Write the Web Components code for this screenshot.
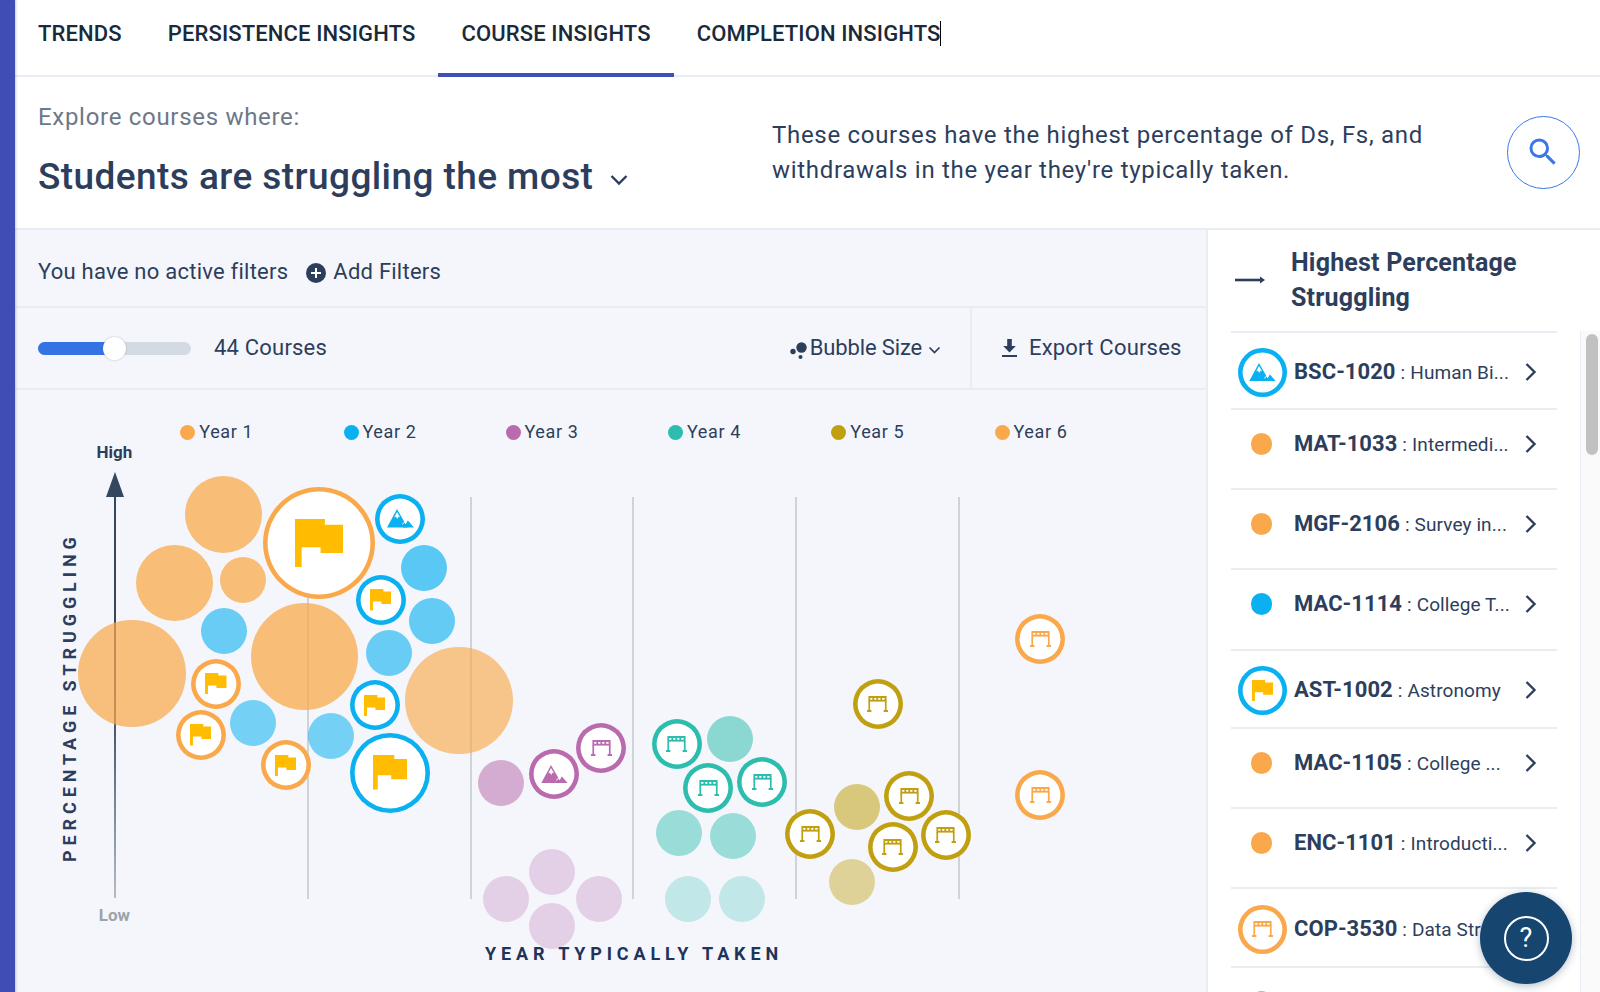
<!DOCTYPE html>
<html lang="en">
<head>
<meta charset="utf-8">
<title>Course Insights</title>
<style>
  html,body{margin:0;padding:0;height:100%;overflow:hidden;background:#fff;font-family:Roboto,"Liberation Sans",sans-serif;}
</style>
</head>
<body>
<app-shell>
  <nav-tabs slot="tabs">
    <tab-item>TRENDS</tab-item>
    <tab-item>PERSISTENCE INSIGHTS</tab-item>
    <tab-item active>COURSE INSIGHTS</tab-item>
    <tab-item caret>COMPLETION INSIGHTS</tab-item>
  </nav-tabs>
  <insight-header slot="header"></insight-header>
  <filter-bar slot="filters"></filter-bar>
  <tool-bar slot="tools"></tool-bar>
  <bubble-chart slot="chart"></bubble-chart>
  <ranking-panel slot="panel">
    <course-row kind="mountain" color="#0BB0F0" h="77" center="41"><span slot="code">BSC-1020</span>Human Bi...</course-row>
    <course-row color="#F9A94B" h="80" center="36"><span slot="code">MAT-1033</span>Intermedi...</course-row>
    <course-row color="#F9A94B" h="80" center="36"><span slot="code">MGF-2106</span>Survey in...</course-row>
    <course-row color="#0BB0F0" h="81" center="36"><span slot="code">MAC-1114</span>College T...</course-row>
    <course-row kind="flag" color="#0BB0F0" h="78" center="41"><span slot="code">AST-1002</span>Astronomy</course-row>
    <course-row color="#F9A94B" h="80" center="36"><span slot="code">MAC-1105</span>College ...</course-row>
    <course-row color="#F9A94B" h="80" center="36"><span slot="code">ENC-1101</span>Introducti...</course-row>
    <course-row kind="bridge" color="#F9A94B" h="79" center="42"><span slot="code">COP-3530</span>Data Str</course-row>
    <course-row color="#F9A94B" h="80" center="36"></course-row>
  </ranking-panel>
  <help-button slot="help"></help-button>
</app-shell>

<script>
const ICONS = {
  flag:(s)=>`<svg width="${s}" height="${s}" viewBox="0 0 145 145" style="display:block"><path fill="#FFBC00" d="M0 0H90V17H145V102H77V85H20V145H0Z"/></svg>`,
  mountain:(c)=>`<svg width="27" height="18.5" viewBox="0 0 27 18.5" style="display:block"><path fill="${c}" d="M0 18.5 10 0 20.5 18.5Z"/><path fill="${c}" d="M16 18.5 20.5 11 27 18.5Z"/><path fill="#fff" d="M10 3 7.2 8.4 9 7.4 10.2 10 11.6 7.6 13.2 8.6Z"/><path fill="none" stroke="#fff" stroke-width="1" d="M15.2 15.2 17.4 13.4 18.6 14.6 20.5 11"/></svg>`,
  bridge:(c)=>`<svg width="21" height="16" viewBox="0 0 21 16" style="display:block"><path fill="${c}" d="M1.4 0H19.6V5.6H1.4Z"/><path fill="#fff" d="M3.2 2H5.4V3.8H3.2ZM7.2 2H9.4V3.8H7.2ZM11.2 2H13.4V3.8H11.2ZM15.2 2H17.6V3.8H15.2Z"/><path fill="${c}" d="M1.4 5H3.1V14H1.4ZM17.9 5H19.6V14H17.9ZM0 14H4.4V16H0ZM16.6 14H21V16H16.6Z"/></svg>`
};
const def=(name,css,html,init)=>customElements.define(name,class extends HTMLElement{
  constructor(){super();const r=this.attachShadow({mode:'open'});
    r.innerHTML=`<style>${css}</style>${typeof html==='function'?html(this):html}`;}
  connectedCallback(){ if(init&&!this._i){this._i=1;init(this,this.shadowRoot);} }
});
const INK='#2D3E5C';

def('app-shell',`
  :host{display:grid;grid-template-columns:15px 1fr;width:1600px;height:992px;position:relative;overflow:hidden;background:#fff}
  .bar{background:#3F4DB5;box-shadow:1px 0 2px rgba(30,40,90,.25);z-index:2}
  main{display:flex;flex-direction:column;min-width:0;height:992px}
  .content{flex:1;display:flex;min-height:0;background:#F4F6FB}
  .left{flex:1;display:flex;flex-direction:column;min-width:0}
  ::slotted(help-button){position:absolute;left:1480px;top:892px}
`,`<div class="bar"></div><main>
   <slot name="tabs"></slot><slot name="header"></slot>
   <div class="content"><div class="left"><slot name="filters"></slot><slot name="tools"></slot><slot name="chart"></slot></div><slot name="panel"></slot></div>
 </main><slot name="help"></slot>`);

def('nav-tabs',`:host{display:flex;height:75px;border-bottom:2px solid #E9EDF3;box-sizing:content-box;background:#fff}`,`<slot></slot>`);

def('tab-item',`
  :host{display:block;position:relative;height:77px;box-sizing:border-box;padding:0 23px;font:500 22px/68px Roboto,sans-serif;letter-spacing:.13px;color:#1B2A3A;white-space:nowrap}
  :host([active])::after{content:"";position:absolute;left:0;right:0;bottom:0;height:4px;background:#3F51B5}
  .caret{display:none;position:absolute;top:21px;right:23px;width:1px;height:25px;background:#000}
  :host([caret]) .caret{display:block}
`,`<slot></slot><span class="caret"></span>`);

def('insight-header',`
  :host{display:flex;height:153px;box-sizing:border-box;border-bottom:2px solid #E9EDF3;background:#fff;position:relative}
  .l{width:757px;padding:25px 0 0 23px;box-sizing:border-box}
  .ex{font:400 24px/30px Roboto,sans-serif;color:#6D7888;letter-spacing:.7px}
  .ti{display:flex;align-items:center;margin-top:20px;font:500 37px/50px Roboto,sans-serif;letter-spacing:.42px;color:${INK};white-space:nowrap}
  .ti svg{margin-left:16px;margin-top:6px}
  .d{width:690px;padding-top:41px;box-sizing:border-box;font:400 24px/35px Roboto,sans-serif;color:${INK};letter-spacing:.7px;white-space:nowrap}
  .s{width:73px;height:73px;border:1.5px solid #3B78E7;border-radius:50%;box-sizing:border-box;margin:39px 0 0 45px;display:flex;align-items:center;justify-content:center}
`,`<div class="l"><div class="ex">Explore courses where:</div>
   <div class="ti">Students are struggling the most<svg width="20" height="12" viewBox="0 0 20 12"><path d="M2.5 2 10 9.5 17.5 2" fill="none" stroke="${INK}" stroke-width="2.4"/></svg></div></div>
   <div class="d">These courses have the highest percentage of Ds, Fs, and<br>withdrawals in the year they're typically taken.</div>
   <div class="s"><svg width="36" height="36" viewBox="0 0 24 24" style="margin:-2px 2px 0 0"><path fill="#3B78E7" d="M15.5 14h-.79l-.28-.27A6.47 6.47 0 0 0 16 9.5 6.5 6.5 0 1 0 9.5 16c1.61 0 3.09-.59 4.23-1.57l.27.28v.79l5 4.99L20.49 19l-4.99-5zm-6 0C7.01 14 5 11.99 5 9.5S7.01 5 9.5 5 14 7.01 14 9.5 11.99 14 9.5 14z"/></svg></div>`);

def('filter-bar',`
  :host{display:flex;align-items:center;height:78px;box-sizing:border-box;padding:7px 0 0 23px;border-bottom:2px solid #E9EDF3;font:400 22px/1 Roboto,sans-serif;letter-spacing:.24px;color:${INK}}
  svg{margin:3px 7px 0 18px}
`,`<span>You have no active filters</span><svg width="20" height="20" viewBox="0 0 20 20"><circle cx="10" cy="10" r="10" fill="${INK}"/><path d="M10 5v10M5 10h10" stroke="#fff" stroke-width="2"/></svg><span>Add Filters</span>`);

def('tool-bar',`
  :host{display:flex;align-items:stretch;height:82px;box-sizing:border-box;border-bottom:2px solid #E9EDF3;font:400 22px/1 Roboto,sans-serif;letter-spacing:.2px;color:${INK};padding-left:23px}
  .track{align-self:center;width:153px;height:13px;border-radius:7px;background:#D4DAE3;position:relative}
  .fill{position:absolute;left:0;top:0;bottom:0;width:76px;border-radius:7px 0 0 7px;background:#3572E3}
  .thumb{position:absolute;left:65px;top:-5px;width:23px;height:23px;border-radius:50%;background:#fff;box-shadow:0 0 2px rgba(60,70,90,.35)}
  .n{align-self:center;margin-left:23px}
  .sp{flex:1}
  .bs{display:flex;align-items:center;padding-right:29px;letter-spacing:-.15px}
  .bs svg:first-child{margin-right:3px;margin-top:4px}
  .bs svg:last-child{margin-left:6px;margin-top:4px}
  .ex{display:flex;align-items:center;width:236px;box-sizing:border-box;border-left:2px solid #E9EDF3;padding-left:29px}
  .ex svg{margin-right:11px}
`,`<div class="track"><div class="fill"></div><div class="thumb"></div></div><span class="n">44 Courses</span><span class="sp"></span>
   <div class="bs"><svg width="17" height="17" viewBox="0 0 17 17"><circle cx="11.5" cy="5.5" r="5.2" fill="${INK}"/><circle cx="3" cy="9.5" r="2.7" fill="${INK}"/><circle cx="10.5" cy="15" r="2" fill="${INK}"/></svg><span>Bubble Size</span><svg width="13" height="9" viewBox="0 0 13 9"><path d="M1.5 1.5 6.5 6.5 11.5 1.5" fill="none" stroke="${INK}" stroke-width="1.7"/></svg></div>
   <div class="ex"><svg width="17" height="20" viewBox="0 0 17 20"><path fill="${INK}" d="M6.2 1h4.6v7h4L8.5 14.4 2.2 8h4zM1 17h15v2H1z"/></svg><span>Export Courses</span></div>`);

def('course-bubble',`
  :host{position:absolute;display:flex;align-items:center;justify-content:center;border-radius:50%;box-sizing:border-box}
`,`<slot></slot>`);

const O=[15,390];
const COL={o:'#F9A94B',b:'#0BB0F0',p:'#B96BAE',t:'#2DBDAE',g:'#C0A010'};
// [x,y,r,colour,opacity] filled; [x,y,r,colour,icon] ringed
const FILLED=[
 [223.3,514.3,38.3,'o',.75],[174.3,583,38.3,'o',.75],[243.3,580.3,23,'o',.75],[132,673.3,53.6,'o',.72],[304.7,656.3,53.6,'o',.75],[459,700.3,53.6,'o',.65],
 [423.7,567.7,23,'b',.66],[431.7,620.7,23,'b',.62],[389,653.3,23,'b',.6],[224,630.7,23,'b',.6],[252.7,722.7,23,'b',.55],[331,736.3,23,'b',.55],
 [501,782.7,23,'p',.54],[552.2,872,23,'p',.27],[505.5,899,23,'p',.27],[598.5,899,23,'p',.27],[552.2,925.7,23,'p',.27],
 [730.2,738.7,23,'t',.53],[678.9,833,23,'t',.45],[732.9,836,23,'t',.45],[688,899,23,'t',.25],[741.7,899,23,'t',.25],
 [856.5,807.3,23,'g',.54],[851.9,882,23,'g',.42]];
const RINGED=[
 [319.3,542.7,56,'o','flag'],[400,518.7,25,'b','mountain'],[380.7,600,25,'b','flag'],[374.7,705.3,25,'b','flag'],[390,772.7,40,'b','flag'],
 [216,683.7,25,'o','flag'],[200.7,735,25,'o','flag'],[285.7,765.3,25,'o','flag'],
 [554.1,774,25,'p','mountain'],[601.2,747.7,25,'p','bridge'],
 [676.6,744.3,25,'t','bridge'],[708.4,788,25,'t','bridge'],[762,782.3,25,'t','bridge'],
 [877.9,704.3,25,'g','bridge'],[909.3,796,25,'g','bridge'],[810.2,834.3,25,'g','bridge'],[892.8,847.3,25,'g','bridge'],[945.7,835.3,25,'g','bridge'],
 [1040.2,639,25,'o','bridge'],[1040.2,795,25,'o','bridge']];

def('bubble-chart',`
  :host{display:block;flex:1;position:relative;overflow:hidden}
  .lg{position:absolute;top:30px;display:flex;align-items:center;gap:4px;font:400 18px/24px Roboto,sans-serif;color:${INK};letter-spacing:.6px}
  .lg i{width:15px;height:15px;border-radius:50%;display:block}
  .v{position:absolute;top:107px;height:402px;width:2px;background:rgba(90,95,100,.24)}
  .axis{position:absolute;left:98.5px;top:106px;width:2.4px;height:402px;background:linear-gradient(#33475F 0%,#33475F 50%,#B5BCC5 100%)}
  .head{position:absolute;left:90.7px;top:82px;width:0;height:0;border-left:9px solid transparent;border-right:9px solid transparent;border-bottom:25px solid #33475F}
  .hi,.lo{position:absolute;width:60px;left:69.4px;text-align:center;font:700 17px/20px Roboto,sans-serif}
  .hi{top:52px;color:${INK}} .lo{top:515px;color:#9BA3AD}
  .yl{position:absolute;left:470px;top:554px;font:700 18px/20px Roboto,sans-serif;letter-spacing:4.85px;color:#22335A;white-space:nowrap}
  .xl{position:absolute;left:45px;top:146px;height:326px;writing-mode:vertical-rl;transform:rotate(180deg);text-align:center;font:700 18px/20px Roboto,sans-serif;letter-spacing:4.9px;color:${INK};white-space:nowrap}
`,`<div id="c"></div>`,(el,r)=>{
  const c=r.getElementById('c');let h='';
  const yrs=[[187.8,'o'],[351,'b'],[513,'p'],[675.5,'t'],[838.8,'g'],[1002,'o']];
  yrs.forEach(([x,k],i)=>{h+=`<div class="lg" style="left:${x-7.5-O[0]}px"><i style="background:${COL[k]}"></i>Year ${i+1}</div>`});
  [307.7,470.7,633.4,796.4,959].forEach(x=>{h+=`<div class="v" style="left:${x-1-O[0]}px"></div>`});
  h+=`<div class="axis"></div><div class="head"></div><div class="hi">High</div><div class="lo">Low</div>
      <div class="xl">PERCENTAGE STRUGGLING</div><div class="yl">YEAR TYPICALLY TAKEN</div>`;
  c.innerHTML=h;
  const place=(x,y,rad)=>`left:${x-rad-O[0]}px;top:${y-rad-O[1]}px;width:${rad*2}px;height:${rad*2}px;`;
  FILLED.forEach(([x,y,rad,k,o])=>{const b=document.createElement('course-bubble');
    b.style.cssText=place(x,y,rad)+`background:${COL[k]};opacity:${o}`;c.appendChild(b);});
  RINGED.forEach(([x,y,rad,k,ic])=>{const b=document.createElement('course-bubble');
    b.style.cssText=place(x,y,rad)+`background:#fff;box-shadow:inset 0 0 0 4.6px ${COL[k]}`;
    b.innerHTML=ic==='flag'?ICONS.flag(rad*.86):ICONS[ic](COL[k]);c.appendChild(b);});
});

def('ranking-panel',`
  :host{display:flex;flex-direction:column;width:394px;height:100%;background:#fff;border-left:2px solid #E9EDF3;box-sizing:border-box;position:relative}
  header{display:flex;align-items:center;height:101px;box-sizing:border-box;padding-left:27px}
  header svg{flex:none;margin-bottom:2px}
  h2{margin:0 0 0 26px;font:700 25px/35px Roboto,sans-serif;letter-spacing:.2px;color:${INK};padding-bottom:2px}
  .body{flex:1;display:flex;min-height:0;overflow:hidden}
  .list{width:326px;margin-left:23px;flex:none}
  .g{margin-left:23px;width:20px;border-left:1px solid #E9EDF3;background:#FAFAFA;position:relative;box-sizing:border-box}
  .th{position:absolute;left:5px;top:3px;width:12px;height:121px;border-radius:6px;background:#C1C1C1}
`,`<header><svg width="30" height="12" viewBox="0 0 30 12"><path d="M0 6H27" fill="none" stroke="${INK}" stroke-width="2.6"/><path d="M25 2.4 30 6 25 9.6Z" fill="${INK}"/></svg><h2>Highest Percentage<br>Struggling</h2></header>
   <div class="body"><div class="list"><slot></slot></div><div class="g"><div class="th"></div></div></div>`);

def('course-row',`
  :host{display:block;position:relative;box-sizing:border-box;border-top:2px solid #E9EDF3;height:80px;color:${INK};white-space:nowrap}
  .ic{position:absolute;display:flex;align-items:center;justify-content:center;border-radius:50%;box-sizing:border-box}
  .tx{position:absolute;left:63px;height:30px;display:flex;align-items:baseline;font:400 19px/30px Roboto,sans-serif;letter-spacing:.1px}
  .code{font:700 22px/30px Roboto,sans-serif;letter-spacing:.05px}
  .sep{margin:0 5px}
  .chev{position:absolute;left:293px}
`,`<span class="ic"></span><div class="tx"><span class="code"><slot name="code"></slot></span><span class="sep">:</span><span class="nm"><slot></slot></span></div>
   <svg class="chev" width="14" height="20" viewBox="0 0 14 20"><path d="M2.5 2 10.5 10 2.5 18" fill="none" stroke="${INK}" stroke-width="2.4"/></svg>`,
 (el,r)=>{
  const h=+el.getAttribute('h')||80, c=+el.getAttribute('center')||35, col=el.getAttribute('color'), kind=el.getAttribute('kind');
  el.style.height=h+'px';
  const ctr=c-2;
  const ic=r.querySelector('.ic'), tx=r.querySelector('.tx'), ch=r.querySelector('.chev');
  tx.style.top=(ctr-15)+'px'; ch.style.top=(ctr-10)+'px';
  if(kind){ic.style.cssText=`left:7px;top:${ctr-24.5}px;width:49px;height:49px;box-shadow:inset 0 0 0 4.6px ${col};background:#fff`;
    ic.innerHTML=kind==='flag'?ICONS.flag(21):ICONS[kind](col);}
  else{ic.style.cssText=`left:19.5px;top:${ctr-10.7}px;width:21.4px;height:21.4px;background:${col}`;}
  if(!el.querySelector('[slot=code]')){tx.style.display='none';ch.style.display='none';}
 });

def('help-button',`
  :host{display:flex;align-items:center;justify-content:center;width:92px;height:92px;border-radius:50%;background:#16456F;box-shadow:0 2px 8px rgba(20,40,70,.3)}
  .r{width:45px;height:45px;border:2px solid #fff;border-radius:50%;box-sizing:border-box;display:flex;align-items:center;justify-content:center;color:#fff;font:400 27px/1 Roboto,sans-serif}
`,`<div class="r">?</div>`);
</script>
</body>
</html>
